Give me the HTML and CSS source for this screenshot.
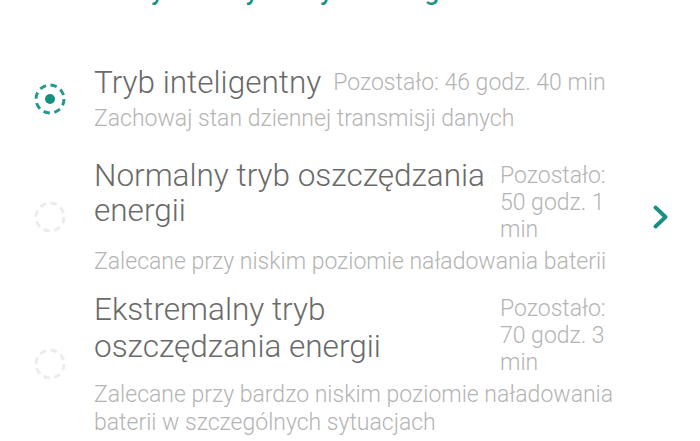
FILE: index.html
```html
<!DOCTYPE html>
<html lang="pl">
<head>
<meta charset="utf-8">
<link rel="stylesheet" href="styles.css">
</head>
<body>
<div class="screen">
  <h1 class="heading">Wybierz tryb zużycia energii</h1>
  <div class="list">
    <div class="row row-first">
      <div class="radio-col">
        <svg class="radio" width="32" height="32" viewBox="0 0 32 32">
          <circle cx="16" cy="16" r="14" fill="none" stroke="#25998b" stroke-width="3" stroke-dasharray="6.5 4.5"/>
          <circle cx="16" cy="16" r="5" fill="#18907f"/>
        </svg>
      </div>
      <div class="content">
        <div class="top">
          <div class="title">Tryb inteligentny</div>
          <div class="remain">Pozostało: 46 godz. 40 min</div>
        </div>
        <div class="sub">Zachowaj stan dziennej transmisji danych</div>
      </div>
      <div class="chev-col"></div>
    </div>
    <div class="row row-second">
      <div class="radio-col">
        <svg class="radio" width="32" height="32" viewBox="0 0 32 32">
          <circle cx="16" cy="16" r="14" fill="none" stroke="#ececec" stroke-width="3" stroke-dasharray="6.5 4.5"/>
        </svg>
      </div>
      <div class="content">
        <div class="top">
          <div class="title title-grow">Normalny tryb oszczędzania energii</div>
          <div class="remain remain-narrow">Pozostało: 50 godz. 1 min</div>
        </div>
        <div class="sub">Zalecane przy niskim poziomie naładowania baterii</div>
      </div>
      <div class="chev-col">
        <svg class="chev" width="18" height="24" viewBox="0 0 18 24">
          <path d="M3.5 2.5 L13.5 12 L3.5 21.5" fill="none" stroke="#17907f" stroke-width="3.8" stroke-linecap="round" stroke-linejoin="round"/>
        </svg>
      </div>
    </div>
    <div class="row row-third">
      <div class="radio-col">
        <svg class="radio" width="32" height="32" viewBox="0 0 32 32">
          <circle cx="16" cy="16" r="14" fill="none" stroke="#ececec" stroke-width="3" stroke-dasharray="6.5 4.5"/>
        </svg>
      </div>
      <div class="content">
        <div class="top">
          <div class="title title-grow">Ekstremalny tryb oszczędzania energii</div>
          <div class="remain remain-narrow">Pozostało: 70 godz. 3 min</div>
        </div>
        <div class="sub">Zalecane przy bardzo niskim poziomie naładowania baterii w szczególnych sytuacjach</div>
      </div>
      <div class="chev-col"></div>
    </div>
  </div>
</div>
</body>
</html>
```
FILE: styles.css
```css
html, body {
  margin: 0;
  padding: 0;
  background: #ffffff;
}
body {
  font-family: Roboto, "Noto Sans", "Liberation Sans", sans-serif;
  font-weight: 300;
  width: 700px;
  height: 441px;
  overflow: hidden;
}
.screen {
  display: flex;
  flex-direction: column;
}
.heading {
  margin: -25px 0 0 128px;
  font-size: 26px;
  line-height: 32px;
  font-weight: 500;
  color: #1a9384;
  white-space: nowrap;
}
.list {
  display: flex;
  flex-direction: column;
  margin-top: 37px;
}
.row {
  display: grid;
  grid-template-columns: 94px 530px 76px;
  padding-top: 10px;
}
.row-first {
  padding-top: 21px;
}
.row-second {
  margin-top: 15px;
}
.row-third {
  margin-top: 5px;
}
.radio-col {
  display: flex;
  align-items: center;
  justify-content: center;
  padding-left: 6px;
}
.radio {
  display: block;
}
.content {
  display: flex;
  flex-direction: column;
}
.top {
  display: flex;
  align-items: flex-start;
  gap: 12px;
  margin-right: 12px;
}
.title {
  font-size: 31.5px;
  line-height: 35px;
  color: #6a6a6a;
  flex: 0 1 auto;
}
.title-grow {
  flex: 1 1 auto;
}
.row-third .title {
  line-height: 37px;
}
.remain {
  font-size: 23px;
  line-height: 27px;
  color: #b4b4b4;
  padding-top: 4px;
  flex: 0 0 auto;
}
.remain-narrow {
  width: 112px;
}
.sub {
  font-size: 23px;
  line-height: 28px;
  color: #b4b4b4;
  margin-top: 5px;
}
.chev-col {
  display: flex;
  align-items: center;
  justify-content: flex-start;
  padding-left: 28px;
}
.chev {
  display: block;
}
```
